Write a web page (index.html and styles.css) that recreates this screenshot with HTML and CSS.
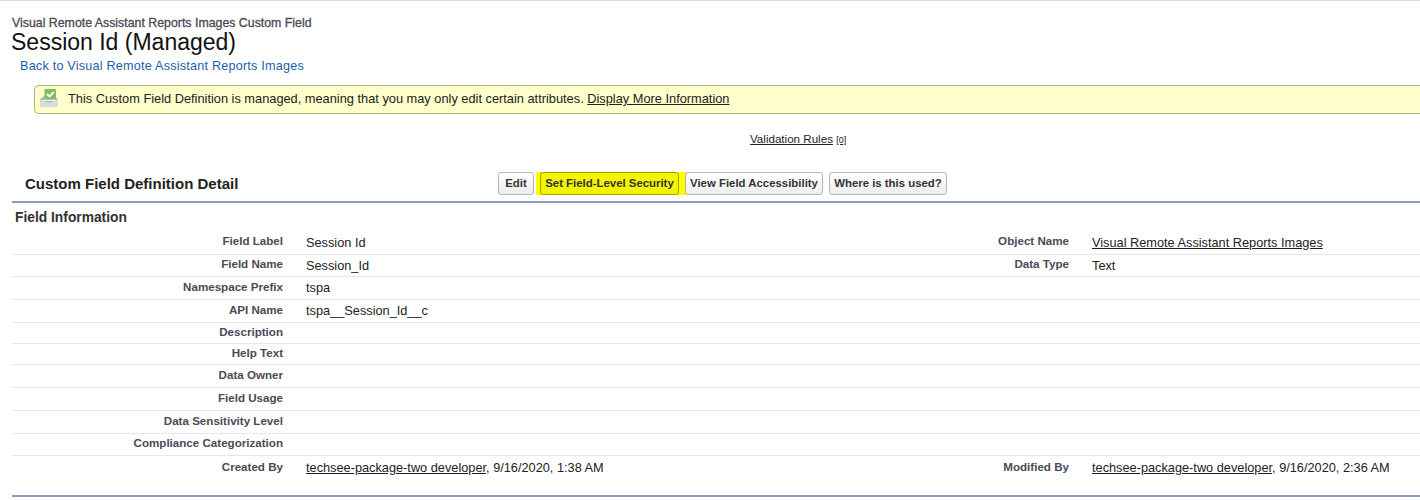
FILE: index.html
```html
<!DOCTYPE html>
<html lang="en">
<head>
<meta charset="utf-8">
<title>Session Id (Managed)</title>
<link rel="stylesheet" href="styles.css">
</head>
<body>
<header class="head">
  <div class="crumb">Visual Remote Assistant Reports Images Custom Field</div>
  <h1 class="title">Session Id (Managed)</h1>
  <a class="back" href="#">Back to Visual Remote Assistant Reports Images</a>
</header>
<div class="notice">
  <svg class="notice-icon" width="18" height="18" viewBox="0 0 18 18" aria-hidden="true">
    <path d="M0 10 L4 7 H14 L18 10 V18 H0 Z" fill="#b9bdb9"/>
    <path d="M4.5 1.2 Q4.5 0 5.7 0 H14.8 Q16 0 16 1.2 V10 H4.5 Z" fill="#7fbf62"/>
    <path d="M2 12 H16 V11 H2 Z" fill="#f1f2ee"/>
    <path d="M7 5 L9.6 7.4 L13.8 3" fill="none" stroke="#fff" stroke-width="1.8"/>
    <path d="M0 10.5 L9 14 L18 10.5 V18 H0 Z" fill="#dadcd8"/>
  </svg>
  <span class="notice-text">This Custom Field Definition is managed, meaning that you may only edit certain attributes. <a class="plain" href="#">Display More Information</a></span>
</div>
<div class="related"><a class="plain" href="#">Validation Rules</a> <a class="count" href="#">[0]</a></div>
<section class="detail">
  <div class="detail-bar">
    <h2 class="detail-title">Custom Field Definition Detail</h2>
    <div class="buttons">
      <button class="btn btn-edit">Edit</button>
      <span class="hl"><button class="btn btn-sec">Set Field-Level Security</button></span>
      <button class="btn btn-view">View Field Accessibility</button>
      <button class="btn btn-where">Where is this used?</button>
    </div>
  </div>
  <h3 class="section">Field Information</h3>
  <div class="rows">
    <div class="row h1"><div class="lab">Field Label</div><div class="val">Session Id</div><div class="lab">Object Name</div><div class="val"><a class="plain" href="#">Visual Remote Assistant Reports Images</a></div></div>
    <div class="row h2"><div class="lab">Field Name</div><div class="val">Session_Id</div><div class="lab">Data Type</div><div class="val">Text</div></div>
    <div class="row h3"><div class="lab">Namespace Prefix</div><div class="val">tspa</div><div class="lab"></div><div class="val"></div></div>
    <div class="row h3"><div class="lab">API Name</div><div class="val">tspa__Session_Id__c</div><div class="lab"></div><div class="val"></div></div>
    <div class="row h4"><div class="lab">Description</div><div class="val"></div><div class="lab"></div><div class="val"></div></div>
    <div class="row h4"><div class="lab">Help Text</div><div class="val"></div><div class="lab"></div><div class="val"></div></div>
    <div class="row h3"><div class="lab">Data Owner</div><div class="val"></div><div class="lab"></div><div class="val"></div></div>
    <div class="row h3"><div class="lab">Field Usage</div><div class="val"></div><div class="lab"></div><div class="val"></div></div>
    <div class="row h3"><div class="lab">Data Sensitivity Level</div><div class="val"></div><div class="lab"></div><div class="val"></div></div>
    <div class="row h2"><div class="lab">Compliance Categorization</div><div class="val"></div><div class="lab"></div><div class="val"></div></div>
    <div class="row last"><div class="lab">Created By</div><div class="val"><a class="plain" href="#">techsee-package-two developer</a>, 9/16/2020, 1:38 AM</div><div class="lab">Modified By</div><div class="val"><a class="plain" href="#">techsee-package-two developer</a>, 9/16/2020, 2:36 AM</div></div>
  </div>
</section>
</body>
</html>
```
FILE: styles.css
```css
html, body { margin: 0; padding: 0; }
body {
  width: 1420px; height: 500px; overflow: hidden; background: #fff;
  font-family: "Liberation Sans", Arial, sans-serif; font-size: 12px; color: #222;
  border-top: 1px solid #dcdcdc; box-sizing: border-box;
}
.head { padding: 16px 0 0 12px; height: 83px; box-sizing: border-box; }
.crumb { font-size: 12.35px; font-weight: 400; color: #4a4a56; line-height: 13px; -webkit-text-stroke: .3px #4a4a56; }
.title { margin: 0 0 0 -1px; font-size: 23px; font-weight: 400; line-height: 24px; color: #111; }
.back { display: block; margin: 5px 0 0 8px; font-size: 12.6px; line-height: 15px; color: #1b5fa8; text-decoration: none; letter-spacing: .23px; }
.notice {
  display: flex; align-items: center; gap: 10px; height: 29px; box-sizing: border-box;
  margin-left: 34px; padding-left: 5px; margin-top: 1px;
  background: #ffffcc; border: 1px solid #b3b37a; border-right: 0; border-radius: 5px 0 0 5px;
  font-size: 12.8px; color: #222;
}
.notice-icon { flex: none; margin-top: -4px; }
.notice-text { padding-bottom: 2px; }
.plain { color: #222; text-decoration: underline; }
.related { height: 54px; box-sizing: border-box; padding: 18px 0 0 750px; font-size: 11.6px; line-height: 14px; }
.count { font-size: 9px; color: #222; }
.detail-bar { display: flex; align-items: center; height: 30px; margin-left: 12px; padding-left: 13px; border-bottom: 2px solid #8e9dbf; padding-bottom: 3px; }
.detail-title { margin: 0; width: 473px; font-size: 15px; font-weight: 700; color: #222; }
.buttons { display: flex; align-items: center; }
.btn {
  height: 23px; padding: 0; box-sizing: border-box; border: 1px solid #b5b5b5; border-radius: 3px;
  background: linear-gradient(#fff, #ededed); color: #333;
  font: 700 11.4px "Liberation Sans", Arial, sans-serif; white-space: nowrap;
}
.btn-edit { width: 36px; margin-right: 2px; }
.hl { display: flex; align-items: center; width: 151px; height: 23px; background: #ffff00; }
.btn-sec { width: 139px; margin-left: 4px; background: #f4f400; border-color: #a0a000; }
.btn-view { width: 138px; margin-left: -2px; position: relative; }
.btn-where { width: 118px; margin-left: 6px; }
.section { margin: 0 0 0 15px; height: 28px; line-height: 30px; font-size: 13.8px; font-weight: 700; color: #333; }
.rows { margin-left: 12px; border-bottom: 2px solid #8e9dbf; }
.row { display: grid; grid-template-columns: 271px 450px 290px 1fr; column-gap: 23px; box-sizing: border-box; border-bottom: 1px solid #e6e8ea; align-items: center; }
.h1 { height: 24px; } .h2 { height: 22px; } .h3 { height: 23px; } .h4 { height: 21px; }
.last { height: 39px; border-bottom: 0; padding-bottom: 17px; }
.lab { text-align: right; font-weight: 700; font-size: 11.6px; color: #4a4a56; padding-bottom: 4px; }
.val { font-size: 12.75px; color: #222; white-space: nowrap; padding-bottom: 1px; }
.last .lab { padding-bottom: 1px; }
.last .val { padding-bottom: 0; }
```
